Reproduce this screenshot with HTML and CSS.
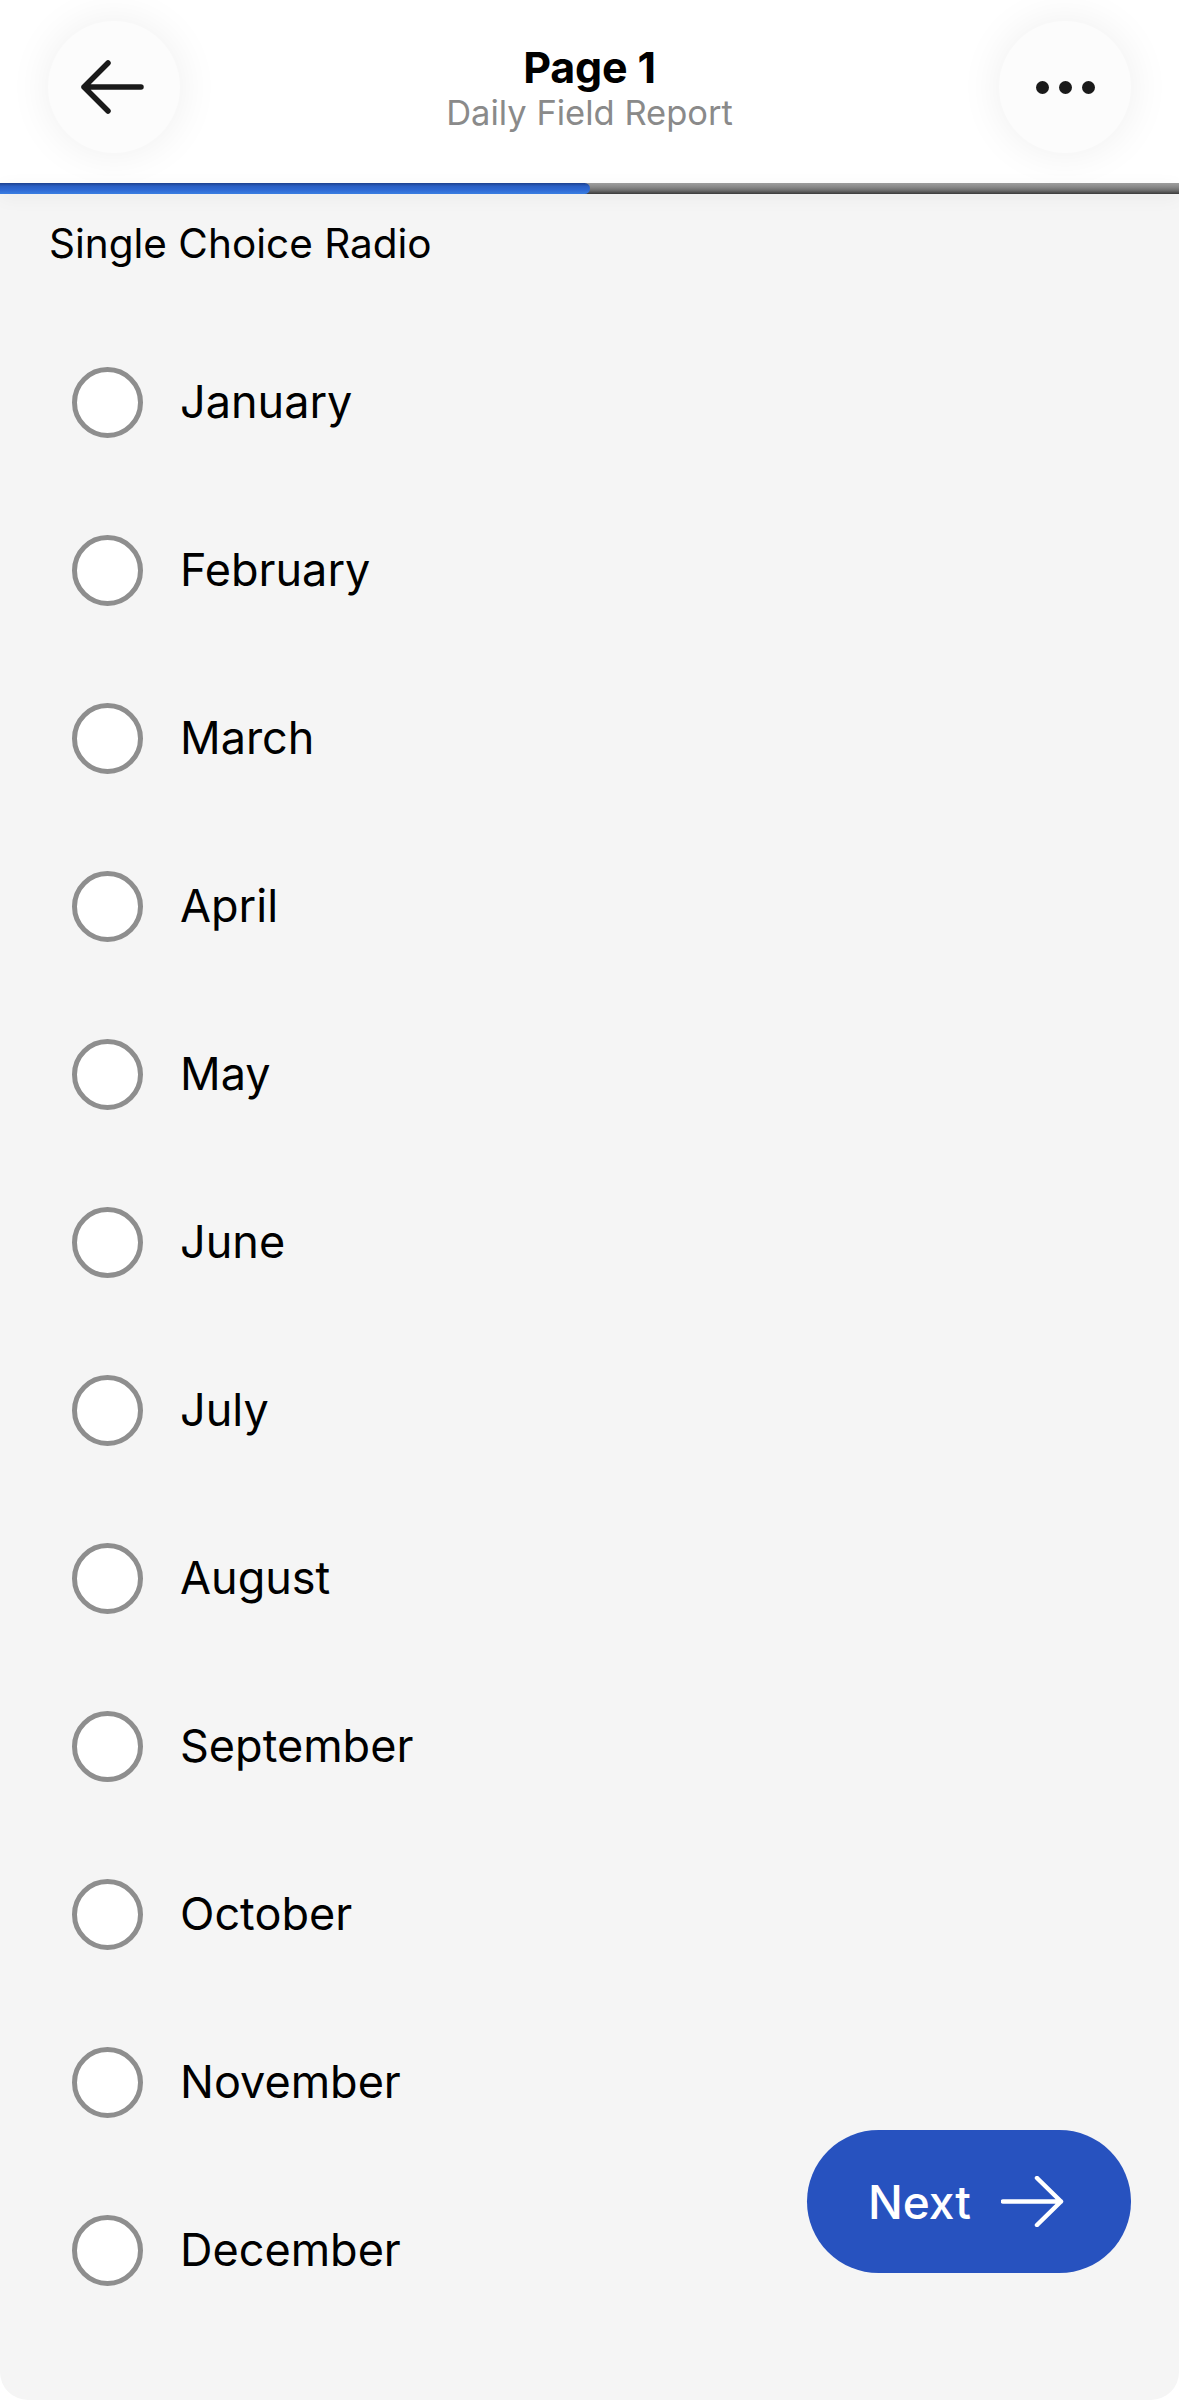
FILE: index.html
```html
<!DOCTYPE html>
<html lang="en">
<head>
<meta charset="utf-8">
<title>Page 1 - Daily Field Report</title>
<link rel="stylesheet" href="styles.css">
</head>
<body>
<div class="screen">
  <header class="header">
    <button class="round-btn" aria-label="Back">
      <svg class="back-icon" width="64" height="54" viewBox="0 0 64 54">
        <path d="M61 27 H4 M28 3 L4 27 L28 51" fill="none" stroke="#1a1a1a" stroke-width="5.5" stroke-linecap="round" stroke-linejoin="round"/>
      </svg>
    </button>
    <div class="title-block">
      <div class="title">Page 1</div>
      <div class="subtitle">Daily Field Report</div>
    </div>
    <button class="round-btn" aria-label="More">
      <span class="dots"><span class="dot"></span><span class="dot"></span><span class="dot"></span></span>
    </button>
  </header>
  <div class="progress"><div class="progress-fill"></div></div>

  <main class="content">
    <div class="question">Single Choice Radio</div>
    <ul class="options">
      <li class="option"><span class="radio"></span><span class="label">January</span></li>
      <li class="option"><span class="radio"></span><span class="label">February</span></li>
      <li class="option"><span class="radio"></span><span class="label">March</span></li>
      <li class="option"><span class="radio"></span><span class="label">April</span></li>
      <li class="option"><span class="radio"></span><span class="label">May</span></li>
      <li class="option"><span class="radio"></span><span class="label">June</span></li>
      <li class="option"><span class="radio"></span><span class="label">July</span></li>
      <li class="option"><span class="radio"></span><span class="label">August</span></li>
      <li class="option"><span class="radio"></span><span class="label">September</span></li>
      <li class="option"><span class="radio"></span><span class="label">October</span></li>
      <li class="option"><span class="radio"></span><span class="label">November</span></li>
      <li class="option"><span class="radio"></span><span class="label">December</span></li>
    </ul>
  </main>

  <button class="next-btn">
    <span class="next-text">Next</span>
    <svg width="63" height="51" viewBox="0 0 63 51">
      <path d="M2 25.5 H60 M36 2 L60 25.5 L36 49" fill="none" stroke="#ffffff" stroke-width="4.5" stroke-linecap="round" stroke-linejoin="round"/>
    </svg>
  </button>
</div>
</body>
</html>
```

FILE: styles.css
```css
* {
  box-sizing: border-box;
}

html {
  background: #ffffff;
}

body {
  margin: 0;
  font-family: Inter, "Noto Sans", "Liberation Sans", sans-serif;
  color: #000000;
}

.screen {
  position: relative;
  min-height: 2400px;
  background: #f5f5f5;
  border-radius: 0 0 28px 28px;
  overflow: hidden;
}

.header {
  height: 183px;
  background: #ffffff;
  padding: 21px 48px 0;
  display: grid;
  grid-template-columns: 132px 1fr 132px;
  align-items: start;
}

.round-btn {
  width: 132px;
  height: 132px;
  border: none;
  border-radius: 50%;
  background: #fcfcfc;
  box-shadow: 0 0 44px rgba(0, 0, 0, 0.07);
  display: flex;
  align-items: center;
  justify-content: center;
  padding: 0;
}

.back-icon {
  margin-left: -4px;
}

.dots {
  display: flex;
  gap: 10px;
}

.dot {
  width: 13px;
  height: 13px;
  border-radius: 50%;
  background: #1a1a1a;
}

.title-block {
  margin-top: 22px;
  text-align: center;
}

.title {
  font-size: 43px;
  line-height: 48px;
  font-weight: 700;
  color: #000000;
  letter-spacing: -0.2px;
}

.subtitle {
  margin-top: 2px;
  font-size: 34.5px;
  line-height: 40px;
  color: #8a8a8a;
}

.progress {
  height: 11px;
  background: linear-gradient(to bottom, #9e9e9e 0%, #8a8a8a 35%, #6a6a6a 70%, #3a3a3a 100%);
  box-shadow: 0 4px 18px rgba(0, 0, 0, 0.05);
}

.progress-fill {
  width: 590px;
  height: 100%;
  border-radius: 0 6px 6px 0;
  background: linear-gradient(to bottom, #1d418f 0%, #2a5fc4 30%, #2f6ad4 65%, #3a7ee2 100%);
}

.content {
  padding-top: 26px;
}

.question {
  padding-left: 49px;
  font-size: 40.5px;
  line-height: 48px;
  color: #000000;
}

.options {
  list-style: none;
  margin: 50px 0 0;
  padding: 0;
}

.option {
  height: 168px;
  display: flex;
  align-items: center;
  padding-left: 72px;
  gap: 37px;
}

.radio {
  width: 71px;
  height: 71px;
  flex: none;
  border-radius: 50%;
  border: 5px solid #8e8e8e;
  background: #ffffff;
}

.label {
  font-size: 45px;
  line-height: 56px;
  color: #000000;
}

.next-btn {
  position: absolute;
  right: 48px;
  bottom: 127px;
  width: 324px;
  height: 143px;
  border: none;
  border-radius: 72px;
  background: #2752bf;
  color: #ffffff;
  display: flex;
  align-items: center;
  justify-content: center;
  gap: 30px;
  padding: 0 6px 0 0;
  font-family: Inter, "Noto Sans", "Liberation Sans", sans-serif;
}

.next-text {
  font-size: 46px;
  line-height: 56px;
  font-weight: 500;
}
```
